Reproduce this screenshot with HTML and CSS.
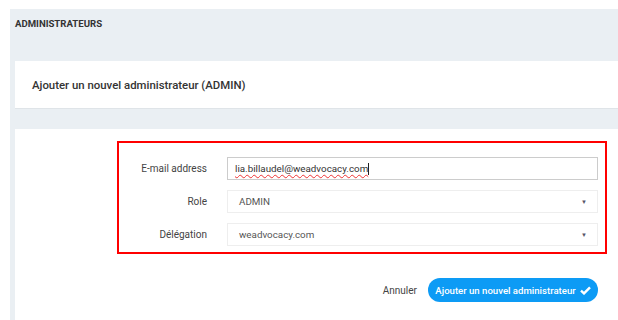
FILE: index.html
```html
<!DOCTYPE html>
<html lang="fr">
<head>
  <meta charset="UTF-8" />
  <title>Administrateurs</title>
  <link rel="stylesheet" href="styles.css">
</head>
<body>
  <div class="main">
    <h1 class="page-title">ADMINISTRATEURS</h1>

    <div class="card card-head">
      <h2>Ajouter un nouvel administrateur (ADMIN)</h2>
    </div>

    <div class="card card-body">
      <div class="form-box">
        <div class="field">
          <label>E-mail address</label>
          <div class="input focus"><span class="typo">lia.billaudel@weadvocacy.com</span><span class="caret"></span></div>
        </div>
        <div class="field">
          <label>Role</label>
          <div class="input select">ADMIN<span class="arrow">&#9660;</span></div>
        </div>
        <div class="field">
          <label>Délégation</label>
          <div class="input select">weadvocacy.com<span class="arrow">&#9660;</span></div>
        </div>
      </div>

      <div class="actions">
        <a class="cancel">Annuler</a>
        <button class="btn-primary">Ajouter un nouvel administrateur
          <svg width="11" height="9" viewBox="0 0 11 9"><path d="M1 4.6 L4 7.4 L10 1.3" fill="none" stroke="#fff" stroke-width="2.4"/></svg>
        </button>
      </div>
    </div>
  </div>
</body>
</html>
```

FILE: styles.css
```css
* {
  margin: 0;
  padding: 0;
  box-sizing: border-box;
  font-family: Roboto, 'Noto Sans', sans-serif;
}

body {
  background: #fff;
  padding: 9px 0 0 10px;
  height: 320px;
  overflow: hidden;
}

.main {
  background: #eaeff3;
  padding: 0 0 0 5px;
  height: 311px;
}

.page-title {
  font-size: 9.6px;
  font-weight: 700;
  color: #333;
  height: 52px;
  padding-top: 9px;
}

.card {
  background: #fff;
}

.card-head {
  height: 48px;
  display: flex;
  align-items: center;
  padding-left: 17px;
  border-bottom: 1px solid #dfe4e8;
  margin-bottom: 20px;
}

.card-head h2 {
  font-size: 11.4px;
  font-weight: 500;
  color: #333;
}

.card-body {
  height: 200px;
  padding: 12px 0 0 102px;
}

.form-box {
  width: 490px;
  border: 2px solid #f00;
  padding: 14px 7px 6px 0;
  display: flex;
  flex-direction: column;
  gap: 10px;
}

.field {
  display: grid;
  grid-template-columns: 88px 1fr;
  column-gap: 20px;
  align-items: center;
}

.field label {
  text-align: right;
  font-size: 10px;
  color: #444;
}

.input {
  height: 23px;
  border: 1px solid #eee;
  padding: 0 10px 0 11px;
  font-size: 9.8px;
  color: #555;
  display: flex;
  align-items: center;
}

.input.focus {
  border-color: #ccc;
  padding-left: 7px;
  color: #333;
}

.typo {
  text-decoration: underline wavy #e33;
  text-decoration-thickness: 1px;
  text-underline-offset: 2px;
}

.caret {
  width: 1px;
  height: 12px;
  background: #222;
}

.select {
  justify-content: space-between;
}

.arrow {
  font-size: 6px;
  color: #556;
}

.actions {
  display: flex;
  justify-content: flex-end;
  align-items: center;
  width: 481px;
  margin-top: 24px;
  gap: 11px;
}

.cancel {
  font-size: 10px;
  color: #444;
}

.btn-primary {
  height: 24px;
  width: 170px;
  border: none;
  border-radius: 12px;
  background: #0d9bf5;
  color: #fff;
  font-size: 9.6px;
  font-weight: 500;
  display: flex;
  align-items: center;
  justify-content: center;
  gap: 4px;
  cursor: pointer;
}
```
